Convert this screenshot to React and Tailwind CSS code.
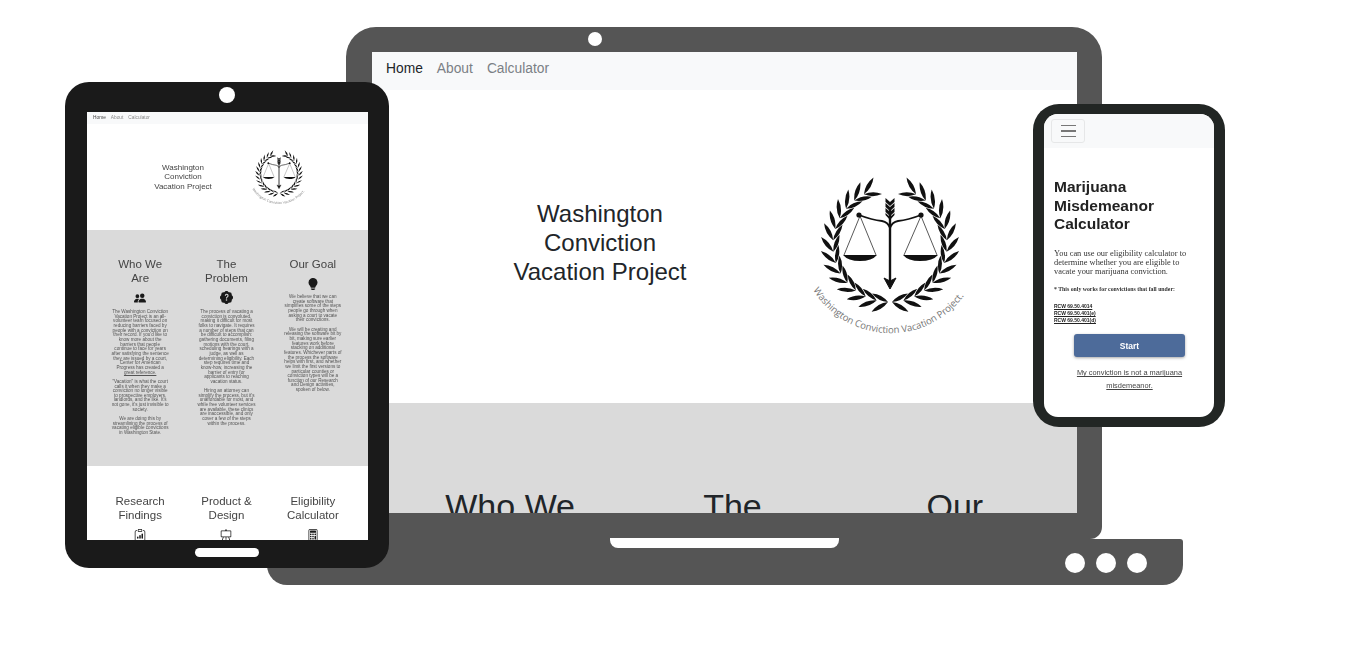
import React, { useId } from "react";
import {
  BsPeopleFill,
  BsPatchQuestionFill,
  BsLightbulbFill,
  BsClipboardData,
  BsEasel,
  BsCalculator,
} from "react-icons/bs";

// Laurel leaves for one half of the wreath, the other half is mirrored
const makeLeaves = () => {
  const cx = 110;
  const cy = 85;
  const r = 57;
  const leaves = [];
  for (let i = 0; i < 14; i++) {
    const a = ((92 + i * 11.6) * Math.PI) / 180;
    const px = cx + r * Math.cos(a);
    const py = cy + r * Math.sin(a);
    const tx = -Math.sin(a);
    const ty = Math.cos(a);
    const nx = Math.cos(a);
    const ny = Math.sin(a);
    [0.55, -0.42].forEach((side) => {
      const L = 19;
      const ex = px + L * (tx * 0.85 + nx * side);
      const ey = py + L * (ty * 0.85 + ny * side);
      const mx = (px + ex) / 2;
      const my = (py + ey) / 2;
      const dx = (ey - py) * 0.22;
      const dy = -(ex - px) * 0.22;
      leaves.push(
        `M${px.toFixed(1)} ${py.toFixed(1)}Q${(mx + dx).toFixed(1)} ${(my + dy).toFixed(1)} ${ex.toFixed(1)} ${ey.toFixed(1)}Q${(mx - dx).toFixed(1)} ${(my - dy).toFixed(1)} ${px.toFixed(1)} ${py.toFixed(1)}Z`
      );
    });
  }
  return leaves.join("");
};

const leafPath = makeLeaves();

const whoWeAre = [
  "The Washington Conviction",
  "Vacation Project is an all-",
  "volunteer team focused on",
  "reducing barriers faced by",
  "people with a conviction on",
  "their record. If you'd like to",
  "know more about the",
  "barriers that people",
  "continue to face for years",
  "after satisfying the sentence",
  "they are issued by a court,",
  "Center for American",
  "Progress has created a",
  <u>great reference.</u>,
  "",
  '"Vacation" is what the court',
  "calls it when they make a",
  "conviction no longer visible",
  "to prospective employers,",
  "landlords, and the like. It's",
  "not gone, it's just invisible to",
  "society.",
  "",
  "We are doing this by",
  "streamlining the process of",
  "vacating eligible convictions",
  "in Washington State.",
];

const theProblem = [
  "The process of vacating a",
  "conviction is convoluted,",
  "making it difficult for most",
  "folks to navigate. It requires",
  "a number of steps that can",
  "be difficult to accomplish:",
  "gathering documents, filing",
  "motions with the court,",
  "scheduling hearings with a",
  "judge, as well as",
  "determining eligibility. Each",
  "step requires time and",
  "know-how, increasing the",
  "barrier of entry for",
  "applicants to reaching",
  "vacation status.",
  "",
  "Hiring an attorney can",
  "simplify the process, but it's",
  "unaffordable for most, and",
  "while free volunteer services",
  "are available, these clinics",
  "are inaccessible, and only",
  "cover a few of the steps",
  "within the process.",
];

const ourGoal = [
  "We believe that we can",
  "create software that",
  "simplifies some of the steps",
  "people go through when",
  "asking a court to vacate",
  "their convictions.",
  "",
  "We will be creating and",
  "releasing the software bit by",
  "bit, making sure earlier",
  "features work before",
  "stacking on additional",
  "features. Whichever parts of",
  "the process the software",
  "helps with first, and whether",
  "we limit the first versions to",
  "particular counties or",
  "conviction types will be a",
  "function of our Research",
  "and Design activities,",
  "spoken of below.",
];

const Logo = ({ className }) => {
  const id = useId();
  return (
    <svg viewBox="0 0 220 190" className={className}>
      <path d={leafPath} fill="#111" />
      <g transform="translate(220 0) scale(-1 1)">
        <path d={leafPath} fill="#111" />
      </g>
      {/* arrow */}
      <path d="M110 48V122" stroke="#111" strokeWidth="2.4" />
      <path d="M104 118L110 129L116 118L110 121Z" fill="#111" stroke="#111" />
      <path
        d="M105.5 38V42L110 46L114.5 42V38L110 42ZM105.5 43V47L110 51L114.5 47V43L110 47ZM105.5 48V52L110 56L114.5 52V48L110 52ZM105.5 53V55L110 60L114.5 55V53L110 57Z"
        fill="#111"
      />
      {/* beam and pans */}
      <path d="M79 55Q92 60 102 61Q108 62 110 68Q112 62 118 61Q128 60 141 55" fill="none" stroke="#111" strokeWidth="1.8" />
      <circle cx="79" cy="55" r="2.6" fill="#111" />
      <circle cx="141" cy="55" r="2.6" fill="#111" />
      <path d="M80 56L64 95M80 56L96 95M141 56L124 95M141 56L157 95" stroke="#111" strokeWidth="0.7" />
      <path d="M63 95H97Q92 101 80 101Q68 101 63 95Z" fill="#111" />
      <path d="M123 95H158Q153 101 140 101Q128 101 123 95Z" fill="#111" />
      {/* curved caption */}
      <path id={id} d="M33 130A91 91 0 0 0 189 128" fill="none" />
      <text fill="#777" fontSize="9.6" fontFamily="'Open Sans', sans-serif">
        <textPath href={`#${id}`} textLength="178">
          Washington Conviction Vacation Project.
        </textPath>
      </text>
    </svg>
  );
};

const LaptopScreen = () => (
  <div className="w-full h-full bg-white overflow-hidden text-[#212529]">
    <div className="h-[38px] bg-[#f8f9fa] flex items-center gap-[14px] pl-[14px] pb-[3px] text-[13.8px]">
      <span>Home</span>
      <span className="text-[#7b8085]">About</span>
      <span className="text-[#7b8085]">Calculator</span>
    </div>
    <div className="h-[313px] flex items-center pl-[53px]">
      <h1 className="w-[350px] mb-[8px] text-center text-[24px] leading-[29px]">
        Washington
        <br />
        Conviction
        <br />
        Vacation Project
      </h1>
      <Logo className="w-[220px] h-[190px] ml-[5px] mt-[17px] shrink-0" />
    </div>
    <div className="bg-[#dadada] h-[200px] pl-[27px] pr-[11px] pt-[83px] grid grid-cols-3 text-center text-[34px] leading-[41px]">
      <div className="px-[45px]">Who We Are</div>
      <div className="px-[45px]">The Problem</div>
      <div className="px-[45px]">Our Goal</div>
    </div>
  </div>
);

const TabletText = ({ lines, className }) => (
  <div className={`whitespace-nowrap text-[4.6px] leading-[4.67px] text-[#555] ${className}`}>
    {lines.map((line, i) => (
      <div key={i} className="h-[4.67px]">
        {line}
      </div>
    ))}
  </div>
);

const TabletColumn = ({ title, icon, lines }) => (
  <div className="flex flex-col items-center text-center">
    <h2 className="w-[62px] text-[11.5px] leading-[14px] text-[#444]">{title}</h2>
    <div className="h-[15px] mt-[5px] flex items-center justify-center text-[#1a1a1a]">{icon}</div>
    {lines && <TabletText lines={lines} className="mt-[5px]" />}
  </div>
);

const TabletScreen = () => (
  <div className="w-full h-full bg-white overflow-hidden blur-[0.4px] text-[#444]">
    <div className="h-[12px] bg-[#f8f9fa] flex items-center gap-[5px] pl-[6px] text-[4.8px]">
      <span>Home</span>
      <span className="text-[#888]">About</span>
      <span className="text-[#888]">Calculator</span>
    </div>
    <div className="h-[106px] flex items-center pl-[40px]">
      <h1 className="w-[112px] text-center text-[8px] leading-[9.3px]">
        Washington
        <br />
        Conviction
        <br />
        Vacation Project
      </h1>
      <Logo className="w-[76px] h-[66px] ml-[2px] shrink-0" />
    </div>
    <div className="h-[236px] bg-[#dadada] pl-[10px] pr-[12px] pt-[27px] grid grid-cols-3">
      <TabletColumn title="Who We Are" icon={<BsPeopleFill size={12} />} lines={whoWeAre} />
      <TabletColumn title="The Problem" icon={<BsPatchQuestionFill size={13} />} lines={theProblem} />
      <div className="flex flex-col items-center text-center">
        <h2 className="text-[11.5px] leading-[14px] text-[#444]">Our Goal</h2>
        <BsLightbulbFill size={12} className="mt-[7px] text-[#1a1a1a]" />
        <TabletText lines={ourGoal} className="mt-[5px]" />
      </div>
    </div>
    <div className="pl-[10px] pr-[12px] pt-[28px] grid grid-cols-3">
      <TabletColumn title="Research Findings" icon={<BsClipboardData size={12} />} />
      <TabletColumn title="Product & Design" icon={<BsEasel size={12} />} />
      <TabletColumn title="Eligibility Calculator" icon={<BsCalculator size={12} />} />
    </div>
  </div>
);

const PhoneScreen = () => (
  <div className="w-full h-full bg-white rounded-[14px] overflow-hidden">
    <div className="h-[34px] bg-[#f8f9fa] flex items-center pl-[7px]">
      <div className="w-[34px] h-[24px] border border-[#e6e7e8] rounded-[3px] flex flex-col items-center justify-center gap-[4px]">
        <span className="w-[15px] h-[1.5px] bg-[#777]" />
        <span className="w-[15px] h-[1.5px] bg-[#777]" />
        <span className="w-[15px] h-[1.5px] bg-[#777]" />
      </div>
    </div>
    <div className="px-[10px] pt-[30px] blur-[0.2px]">
      <h1 className="text-[15.5px] leading-[18.5px] font-bold text-[#222]">
        Marijuana
        <br />
        Misdemeanor
        <br />
        Calculator
      </h1>
      <p className="mt-[15px] w-[140px] font-['Liberation_Serif',serif] text-[8.4px] leading-[9.3px] text-[#333]">
        You can use our eligibility calculator to determine whether you are eligible to vacate your marijuana conviction.
      </p>
      <p className="mt-[10px] font-['Liberation_Serif',serif] font-bold text-[5.8px] leading-[7px] text-[#333]">
        * This only works for convictions that fall under:
      </p>
      <div className="mt-[10px] text-[5px] leading-[7px] font-bold text-[#222] underline">
        <div>RCW 69.50.4014</div>
        <div>RCW 69.50.401(e)</div>
        <div>RCW 69.50.401(d)</div>
      </div>
      <div className="mt-[10px] ml-[20px] w-[111px] h-[23px] bg-[#4d6b9a] rounded-[3px] shadow-[0_1px_3px_rgba(0,0,0,0.35)] flex items-center justify-center text-white text-[8.5px] font-bold">
        Start
      </div>
      <p className="mt-[9px] ml-[20px] w-[111px] text-center text-[7.4px] leading-[13px] text-[#444] underline">
        My conviction is not a marijuana misdemeanor.
      </p>
    </div>
  </div>
);

export default function App() {
  return (
    <div className="relative w-[1350px] h-[650px] bg-white overflow-hidden font-['Liberation_Sans',sans-serif]">
      {/* Laptop */}
      <div className="absolute left-[267px] top-[539px] w-[916px] h-[46px] bg-[#555555] rounded-tr-[3px] rounded-b-[20px] flex items-center justify-end gap-[11px] pr-[36px] pt-[1px]">
        <span className="w-[20px] h-[20px] rounded-full bg-white" />
        <span className="w-[20px] h-[20px] rounded-full bg-white" />
        <span className="w-[20px] h-[20px] rounded-full bg-white" />
      </div>
      <div className="absolute left-[346px] top-[27px] w-[756px] h-[512px] bg-[#555555] rounded-t-[30px] rounded-br-[12px] pl-[26px] pr-[25px] pt-[25px] pb-[26px]">
        <LaptopScreen />
        <span className="absolute left-[242px] top-[5px] w-[14px] h-[14px] rounded-full bg-white" />
      </div>
      <div className="absolute left-[610px] top-[538px] w-[229px] h-[10px] bg-white rounded-b-[8px]" />

      {/* Tablet */}
      <div className="absolute left-[65px] top-[82px] w-[324px] h-[486px] bg-[#1a1a1a] rounded-[24px] pl-[22px] pr-[21px] pt-[30px] pb-[28px]">
        <TabletScreen />
        <span className="absolute left-[154px] top-[5px] w-[16px] h-[16px] rounded-full bg-white" />
        <span className="absolute left-[130px] top-[466px] w-[64px] h-[9px] rounded-full bg-white" />
      </div>

      {/* Phone */}
      <div className="absolute left-[1033px] top-[104px] w-[192px] h-[323px] bg-[#222624] rounded-[26px] pl-[11px] pr-[11px] pt-[10px] pb-[10px]">
        <PhoneScreen />
      </div>
    </div>
  );
}
